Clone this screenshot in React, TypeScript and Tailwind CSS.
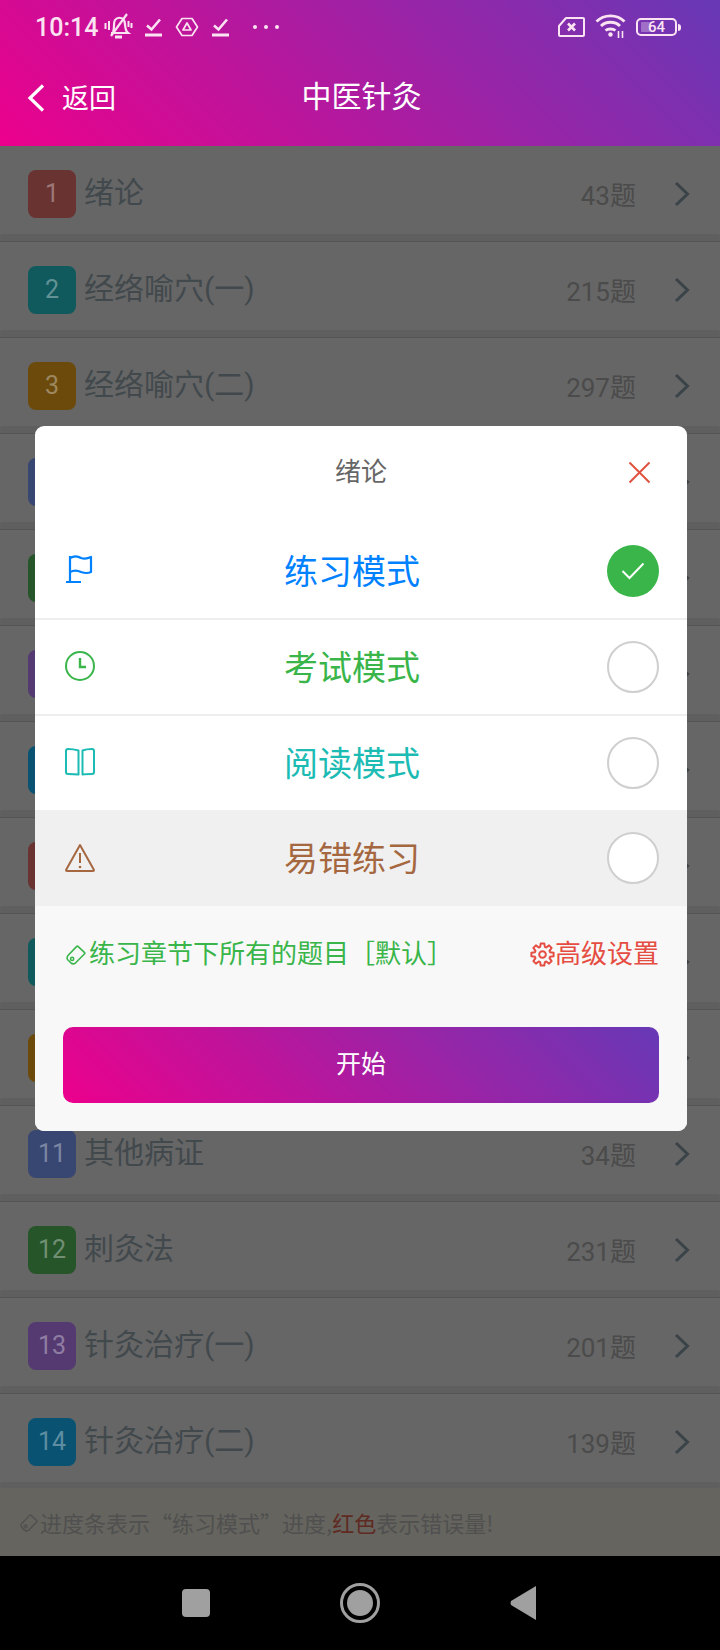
interface Chapter {
  name: string;
  count: number;
  color: string;
}

const chapters: Chapter[] = [
  { name: "绪论", count: 43, color: "bg-[#693332]" },
  { name: "经络喻穴(一)", count: 215, color: "bg-[#105a5e]" },
  { name: "经络喻穴(二)", count: 297, color: "bg-[#6b4a0c]" },
  { name: "经络喻穴(三)", count: 180, color: "bg-[#384672]" },
  { name: "内科病证(一)", count: 160, color: "bg-[#27552a]" },
  { name: "内科病证(二)", count: 150, color: "bg-[#553a72]" },
  { name: "内科病证(三)", count: 140, color: "bg-[#0a5272]" },
  { name: "妇儿病证", count: 90, color: "bg-[#693332]" },
  { name: "皮外骨伤", count: 80, color: "bg-[#105a5e]" },
  { name: "五官病证", count: 70, color: "bg-[#6b4a0c]" },
  { name: "其他病证", count: 34, color: "bg-[#384672]" },
  { name: "刺灸法", count: 231, color: "bg-[#27552a]" },
  { name: "针灸治疗(一)", count: 201, color: "bg-[#553a72]" },
  { name: "针灸治疗(二)", count: 139, color: "bg-[#0a5272]" },
];

const CheckBar = () => (
  <svg width="19" height="20" viewBox="0 0 19 20" fill="none" stroke="currentColor" strokeWidth="2.6">
    <path d="M3 8.5 L7.5 12.5 L16 2.5" />
    <path d="M1 18 H18" strokeWidth="3" />
  </svg>
);

const StatusBar = () => (
  <div className="flex h-[54px] items-center pl-[35px] pr-[39px] text-[#fbe3f2]">
    <span className="mr-[6px] text-[25px] font-medium leading-none">10:14</span>
    <svg width="29" height="28" viewBox="0 0 29 28" fill="none" stroke="currentColor" strokeWidth="2.2">
      <path d="M9 19 C11 15 9 10 11 7 C13 4 18 4 20 7 C22 11 20 17 24 20 H7" />
      <path d="M11 24 H18" strokeWidth="3" />
      <path d="M23 1 L7 23" />
      <path d="M1.5 10 V16 M5 8 V17 M24.5 8 V14 M27.5 10 V15" strokeWidth="2" />
    </svg>
    <span className="ml-[11px]"><CheckBar /></span>
    <svg className="ml-[12px]" width="24" height="20" viewBox="0 0 24 20" fill="none" stroke="currentColor" strokeWidth="1.7">
      <path d="M7 1.5 H17 L22.5 10 L17 18.5 H7 L1.5 10 Z" strokeLinejoin="round" />
      <path d="M12 6 L16 13 H8 Z" strokeLinejoin="round" />
    </svg>
    <span className="ml-[12px]"><CheckBar /></span>
    <div className="ml-[23px] flex gap-[7px]">
      <span className="h-[4px] w-[4px] rounded-full bg-[#fbe3f2]" />
      <span className="h-[4px] w-[4px] rounded-full bg-[#fbe3f2]" />
      <span className="h-[4px] w-[4px] rounded-full bg-[#fbe3f2]" />
    </div>
    <div className="flex-1" />
    <svg width="27" height="20" viewBox="0 0 27 20" fill="none" stroke="currentColor" strokeWidth="2">
      <path d="M8 1 H25 A1 1 0 0 1 26 2 V18 A1 1 0 0 1 25 19 H2 A1 1 0 0 1 1 18 V9 Z" strokeLinejoin="round" />
      <path d="M10 6.5 L17 13.5 M17 6.5 L10 13.5" strokeWidth="2.6" />
    </svg>
    <svg className="mb-[3px] ml-[10px]" width="31" height="25" viewBox="0 0 31 25" fill="none" stroke="currentColor" strokeWidth="2.8">
      <path d="M1.5 8.5 C9 1 22 1 29.5 8.5" />
      <path d="M6 13 C11 8 20 8 25 13" />
      <path d="M10.5 17.5 C13 15.5 18 15.5 20.5 17.5" />
      <circle cx="15.5" cy="21.5" r="2.2" fill="currentColor" stroke="none" />
      <path d="M23.5 18 V25 M27.5 18 V25" strokeWidth="1.6" />
    </svg>
    <div className="ml-[10px] flex items-center">
      <div className="relative flex h-[18px] w-[41px] items-center justify-center rounded-[5px] border-2 border-[#fbe3f2] text-[15px] font-medium leading-none">
        <span className="absolute left-[3px] top-[2px] h-[10px] w-[10px] rounded-[1px] bg-white/30" />
        <span className="relative">64</span>
      </div>
      <span className="ml-[1px] h-[7px] w-[3px] rounded-r-sm bg-[#fbe3f2]" />
    </div>
  </div>
);

const NavHeader = () => (
  <div className="relative flex h-[92px] items-start pl-[27px] pt-[30px] text-white">
    <svg width="18" height="28" viewBox="0 0 18 28" fill="none" stroke="currentColor" strokeWidth="3.2">
      <path d="M16 1.5 L3 14 L16 26.5" />
    </svg>
    <span className="ml-[17px] mt-[1px] text-[27px] leading-[28px]">返回</span>
    <span className="absolute left-[3px] right-0 top-[27px] text-center text-[30px] leading-[32px]">中医针灸</span>
  </div>
);

const ChapterRow = ({ item, index }: { item: Chapter; index: number }) => (
  <div className="shrink-0">
    <div className="flex h-[88px] items-start pl-[28px] pr-[30px] pt-[24px]">
      <div
        className={`flex h-[48px] w-[48px] items-center justify-center rounded-[8px] text-[25px] text-white/35 ${item.color}`}
      >
        {index + 1}
      </div>
      <span className="ml-[8px] mt-[5px] text-[30px] leading-[36px] text-[#42494d]">{item.name}</span>
      <div className="flex-1" />
      <span className="mt-[8px] text-[26px] leading-[36px] text-[#4b4b4b]">{item.count}题</span>
      <svg className="ml-[38px] mt-[11px]" width="16" height="26" viewBox="0 0 16 26" fill="none" stroke="#3a4347" strokeWidth="3">
        <path d="M2 2 L13.5 13 L2 24" />
      </svg>
    </div>
    <div className="h-[7px] rounded-t-[3px] bg-[#5f5f5f]" />
    <div className="h-[1px] bg-[#555555]" />
  </div>
);

const TagIcon = ({ className }: { className: string }) => (
  <svg className={className} viewBox="0 0 24 24" fill="none" stroke="currentColor" strokeWidth="1.8">
    <path d="M12 3 Q13 2 14 3 L21 9.5 Q22 10.5 21 11.5 L10.5 22 Q8 23.5 6 22 L2 18 Q0.5 16 2 13.5 Z" strokeLinejoin="round" />
    <circle cx="7" cy="17" r="1.8" />
  </svg>
);

// eight teeth round a circle, the gear in front of 高级设置
const gearPath =
  Array.from({ length: 8 }, (_, i) => {
    const a = (i * Math.PI) / 4;
    const pt = (r: number, d: number) =>
      `${(12 + r * Math.cos(a + d)).toFixed(2)} ${(12 + r * Math.sin(a + d)).toFixed(2)}`;
    return `${i === 0 ? "M" : "L"}${pt(7.6, -0.3)} L${pt(10.8, -0.16)} L${pt(10.8, 0.16)} L${pt(7.6, 0.3)}`;
  }).join(" ") + " Z";

const GearIcon = () => (
  <svg width="25" height="25" viewBox="0 0 24 24" fill="none" stroke="currentColor" strokeWidth="1.9">
    <path d={gearPath} strokeLinejoin="round" />
    <circle cx="12" cy="12" r="3.2" />
  </svg>
);

const modes = [
  {
    label: "练习模式",
    color: "text-[#0081ff]",
    checked: true,
    bg: "bg-white border-b-2 border-[#eeeeee] h-[96px]",
    icon: (
      <svg className="mb-[5px]" width="30" height="30" viewBox="0 0 30 30" fill="none" stroke="currentColor" strokeWidth="2.2">
        <path d="M5 2 V28 M1 28 H16" />
        <path d="M5 4 C10 1 13 2 16 4 C19 5 22 5 26 3 V18 C22 20 19 19 16 18 C12 16 9 16 5 18" strokeLinejoin="round" />
      </svg>
    ),
  },
  {
    label: "考试模式",
    color: "text-[#39b54a]",
    checked: false,
    bg: "bg-white border-b-2 border-[#eeeeee] h-[96px]",
    icon: (
      <svg className="mb-[2px]" width="30" height="30" viewBox="0 0 30 30" fill="none" stroke="currentColor" strokeWidth="2">
        <circle cx="15" cy="15" r="14" />
        <path d="M15 7 V16 H21" strokeWidth="2.4" />
      </svg>
    ),
  },
  {
    label: "阅读模式",
    color: "text-[#1cbbb4]",
    checked: false,
    bg: "bg-white h-[94px]",
    icon: (
      <svg className="mb-[2px]" width="30" height="30" viewBox="0 0 30 30" fill="none" stroke="currentColor" strokeWidth="2">
        <path d="M13.5 3.5 C10 2.5 7 2 3 2 C1.5 2 1 3 1 4 V25 C1 26 1.5 27 3 27 C7 27 10 27 13.5 27.5 Z" strokeLinejoin="round" />
        <path d="M17.5 3.5 C20 2.5 23 2 27 2 C28.5 2 29 3 29 4 V25 C29 26 28.5 27 27 27 C23 27 20 27 17.5 27.5 Z" strokeLinejoin="round" />
      </svg>
    ),
  },
  {
    label: "易错练习",
    color: "text-[#a5673f]",
    checked: false,
    bg: "bg-[#f0f0f0] h-[96px]",
    icon: (
      <svg width="30" height="30" viewBox="0 0 30 30" fill="none" stroke="currentColor" strokeWidth="2">
        <path d="M15 2 L29 27 C29 28 28.5 28 28 28 H2 C1.5 28 1 28 1 27 Z" strokeLinejoin="round" />
        <path d="M15 10 V20" />
        <circle cx="15" cy="24" r="1.3" fill="currentColor" stroke="none" />
      </svg>
    ),
  },
];

const ModeDialog = () => (
  <div className="absolute inset-0 flex items-start justify-center pl-[2px] pt-[426px]">
    <div className="w-[652px] overflow-hidden rounded-[9px] bg-white">
      <div className="relative flex h-[98px] items-start justify-center pt-[27px]">
        <span className="text-[26px] leading-[38px] text-[#666666]">绪论</span>
        <svg className="absolute right-[36px] top-[35px]" width="23" height="23" viewBox="0 0 23 23" fill="none" stroke="#e0523f" strokeWidth="2">
          <path d="M1.5 1.5 L21.5 21.5 M21.5 1.5 L1.5 21.5" />
        </svg>
      </div>
      {modes.map((m) => (
        <div key={m.label} className={`flex items-center pl-[30px] pr-[28px] ${m.bg} ${m.color}`}>
          {m.icon}
          <span className="mt-[2px] flex-1 pl-[2px] text-center text-[34px] leading-[44px]">{m.label}</span>
          {m.checked ? (
            <div className="flex h-[52px] w-[52px] items-center justify-center rounded-full bg-[#39b54a]">
              <svg width="24" height="18" viewBox="0 0 24 18" fill="none" stroke="white" strokeWidth="2">
                <path d="M1.5 9 L8.5 16 L22.5 1.5" />
              </svg>
            </div>
          ) : (
            <div className="h-[52px] w-[52px] rounded-full border-2 border-[#cfcfcf] bg-white" />
          )}
        </div>
      ))}
      <div className="bg-[#f8f8f8] px-[28px] pb-[28px] pt-[30px]">
        <div className="flex h-[36px] items-center justify-between text-[26px] leading-[36px]">
          <div className="flex items-center text-[#39b54a]">
            <TagIcon className="ml-[3px] mr-[2px] h-[21px] w-[21px]" />
            <span>练习章节下所有的题目［默认］</span>
          </div>
          <div className="flex items-center text-[#e54d42]">
            <GearIcon />
            <span>高级设置</span>
          </div>
        </div>
        <button className="mt-[55px] flex h-[76px] w-full items-center justify-center rounded-[10px] bg-linear-45/srgb from-[#ec008c] to-[#6739b6] text-[25px] text-white">
          开始
        </button>
      </div>
    </div>
  </div>
);

export default function App() {
  return (
    <div className="relative flex h-[1650px] w-[720px] flex-col overflow-hidden bg-black font-['Roboto','Noto_Sans_CJK_SC',sans-serif]">
      <div className="h-[146px] shrink-0 bg-linear-45/srgb from-[#ec008c] to-[#6739b6]">
        <StatusBar />
        <NavHeader />
      </div>

      <div className="flex h-[1342px] shrink-0 flex-col overflow-hidden bg-[#666666]">
        {chapters.map((c, i) => (
          <ChapterRow key={i} item={c} index={i} />
        ))}
      </div>

      <div className="flex h-[68px] shrink-0 items-center bg-[#65645e] pl-[20px] text-[22px] leading-[30px] text-[#505050]">
        <TagIcon className="h-[19px] w-[19px]" />
        <span className="ml-px font-['Noto_Sans_CJK_SC',sans-serif]">
          进度条表示“练习模式”进度,<span className="text-[#5f2a22]">红色</span>表示错误量!
        </span>
      </div>

      <div className="flex flex-1 items-center justify-center gap-[130px] pr-[3px]">
        <div className="h-[28px] w-[28px] rounded-[4px] bg-[#a0a0a0]" />
        <div className="flex h-[40px] w-[40px] items-center justify-center rounded-full border-[3px] border-[#a0a0a0]">
          <div className="h-[26px] w-[26px] rounded-full bg-[#a0a0a0]" />
        </div>
        <svg width="26" height="34" viewBox="0 0 26 34" fill="#a0a0a0">
          <path d="M26 0 V34 L1 19 Q0 17 1 15 Z" />
        </svg>
      </div>

      <ModeDialog />
    </div>
  );
}
